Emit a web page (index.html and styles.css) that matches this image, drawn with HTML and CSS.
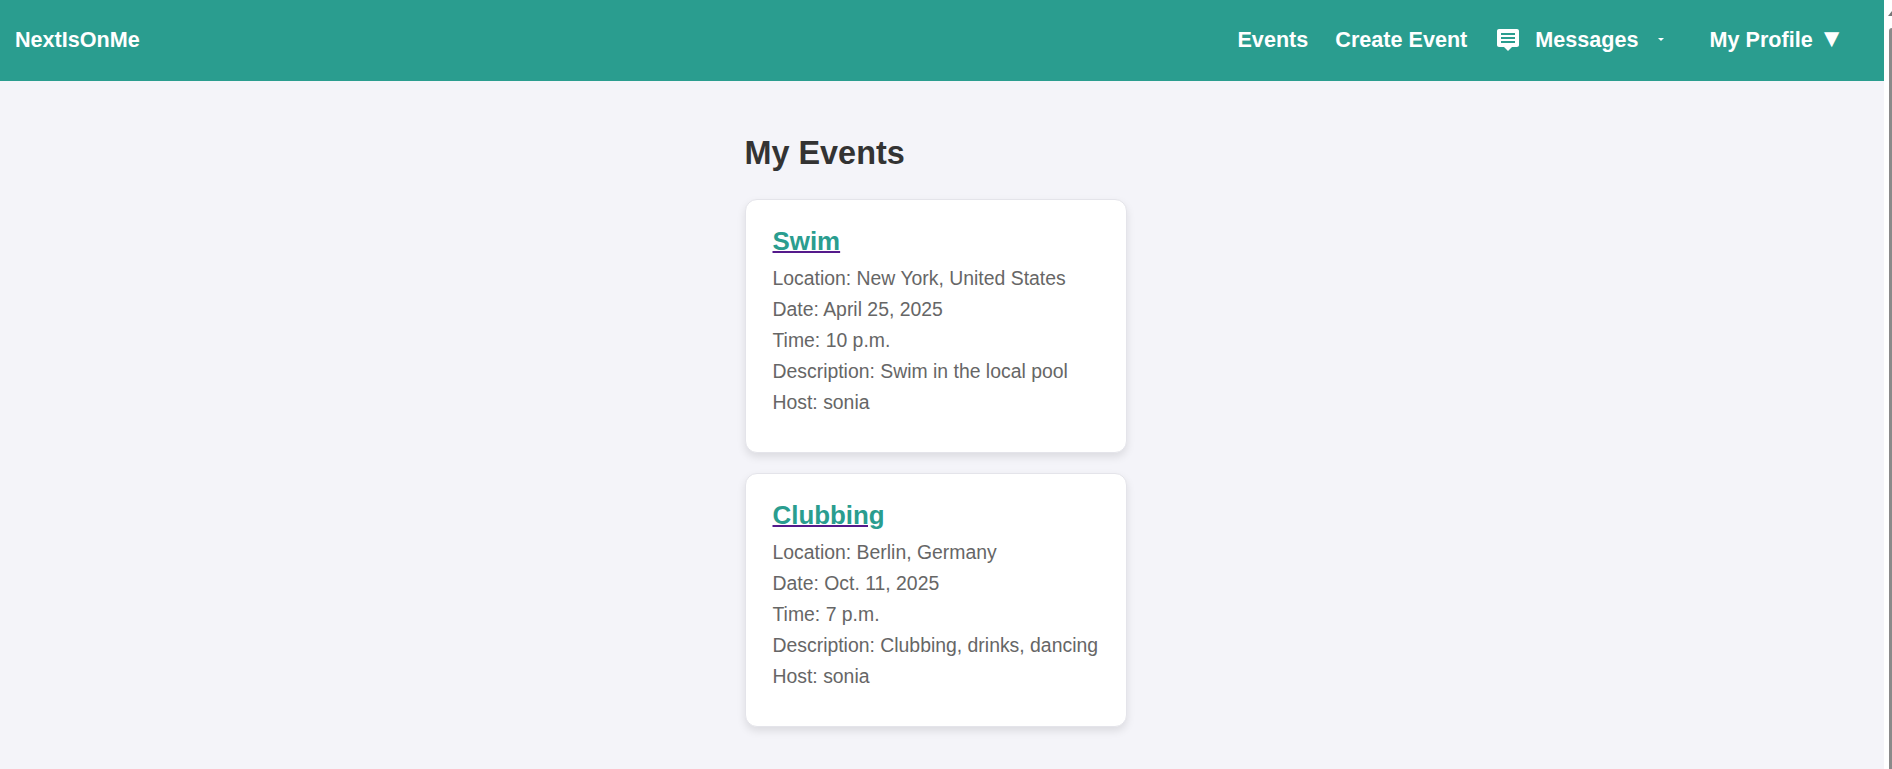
FILE: index.html
```html
<html>
  <head>
    <title>My Events</title>
    <link rel="stylesheet" href="styles.css">
  </head>
  <body>
    <div class="page">
      <nav class="navbar">
        <a class="brand" href="#">NextIsOnMe</a>
        <ul class="nav-links">
          <li><a href="#">Events</a></li>
          <li><a href="#">Create Event</a></li>
          <li class="messages">
            <svg class="msg-icon" width="24" height="24" viewBox="0 0 24 24" fill="none" xmlns="http://www.w3.org/2000/svg">
              <path fill-rule="evenodd" d="M3 1H21C22.1 1 23 1.9 23 3V17C23 18.1 22.1 19 21 19H16L12 23L8 19H3C1.9 19 1 18.1 1 17V3C1 1.9 1.9 1 3 1ZM5 5V7H19V5H5ZM5 9V11H19V9H5ZM5 13V15H19V13H5Z" fill="white"/>
            </svg>
            <a href="#">Messages</a>
            <span class="caret"></span>
          </li>
          <li class="profile"><a href="#">My Profile <span class="arrow">▼</span></a></li>
        </ul>
      </nav>

      <main class="content">
        <h1>My Events</h1>

        <div class="event-card">
          <h3><a href="#">Swim</a></h3>
          <p>Location: New York, United States</p>
          <p>Date: April 25, 2025</p>
          <p>Time: 10 p.m.</p>
          <p>Description: Swim in the local pool</p>
          <p>Host: sonia</p>
        </div>

        <div class="event-card">
          <h3><a href="#">Clubbing</a></h3>
          <p>Location: Berlin, Germany</p>
          <p>Date: Oct. 11, 2025</p>
          <p>Time: 7 p.m.</p>
          <p>Description: Clubbing, drinks, dancing</p>
          <p>Host: sonia</p>
        </div>
      </main>
    </div>

    <div class="scrollbar">
      <span class="scroll-up"></span>
      <span class="scroll-thumb"></span>
    </div>
  </body>
</html>
```

FILE: styles.css
```css
* {
  box-sizing: border-box;
  margin: 0;
  padding: 0;
}

html, body {
  height: 769px;
  overflow: hidden;
}

body {
  display: flex;
  font-family: 'Liberation Sans', Arial, sans-serif;
  font-size: 18px;
  background: #F4F4F9;
}

.page {
  flex: 1;
  min-width: 0;
}

.navbar {
  height: 81px;
  display: flex;
  align-items: center;
  justify-content: space-between;
  padding: 0 25px 2px 15px;
  background: #2A9D8F;
}

.navbar a {
  color: white;
  text-decoration: none;
  font-weight: 700;
  font-size: 21.6px;
}

.nav-links {
  display: flex;
  align-items: center;
  list-style: none;
  gap: 27px;
  padding-right: 14.5px;
}

.messages {
  display: flex;
  align-items: center;
  margin-left: 2px;
}

.msg-icon {
  margin-right: 15px;
}

.caret {
  width: 0;
  height: 0;
  margin-left: 19px;
  border-left: 3px solid transparent;
  border-right: 3px solid transparent;
  border-top: 3px solid white;
}

.profile {
  margin-left: 19px;
}

.arrow {
  font-size: 26px;
  line-height: 20px;
}

.content {
  width: 382.5px;
  margin-left: 744.5px;
  padding-top: 54px;
}

h1 {
  font-size: 32.4px;
  line-height: 37px;
  color: #333;
  margin-bottom: 27px;
}

.event-card {
  height: 254px;
  margin-bottom: 20px;
  padding: 26px 27px;
  background: white;
  border: 1px solid #E4E4EA;
  border-radius: 12px;
  box-shadow: 0 4px 8px rgba(0, 0, 0, 0.1);
}

h3 {
  font-size: 25.9px;
  line-height: 30px;
  margin-bottom: 7px;
}

h3 a {
  color: #2A9D8F;
  text-decoration-color: #551A8B;
  text-decoration-thickness: 2px;
}

.event-card p {
  font-size: 19.4px;
  line-height: 31px;
  color: #666;
}

.scrollbar {
  width: 8px;
  background: white;
  position: relative;
  overflow: hidden;
}

.scroll-up {
  position: absolute;
  top: 11px;
  left: 4px;
  width: 0;
  height: 0;
  border-left: 4px solid transparent;
  border-right: 4px solid transparent;
  border-bottom: 5px solid #777;
}

.scroll-thumb {
  position: absolute;
  top: 28px;
  bottom: 0;
  left: 5px;
  width: 3px;
  background: #8A8A8A;
  border-radius: 3px 0 0 0;
}
```
